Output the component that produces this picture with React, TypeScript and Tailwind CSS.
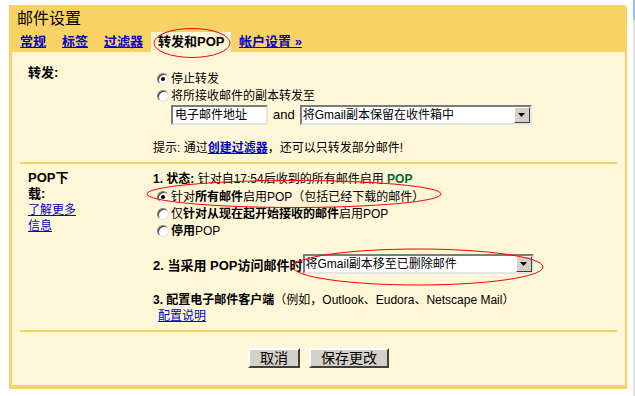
import React from 'react';

function Radio({ checked }: { checked?: boolean }) {
  return (
    <span className="inline-flex items-center justify-center shrink-0 w-[12px] h-[12px] rounded-full bg-white border border-t-[#7b7b7b] border-l-[#7b7b7b] border-b-[#e4e4e4] border-r-[#e4e4e4] shadow-[inset_1px_1px_0_#404040]">
      {checked && <span className="w-[4px] h-[4px] rounded-full bg-black" />}
    </span>
  );
}

function Select({ width, label }: { width: string; label: string }) {
  return (
    <div className={`flex ${width} h-[20px] bg-white border-2 border-t-[#7b7b7b] border-l-[#7b7b7b] border-b-[#e4e4e4] border-r-[#e4e4e4]`}>
      <span className="flex-1 pl-[1px] leading-[16px] whitespace-nowrap overflow-hidden">{label}</span>
      <span className="flex items-center justify-center w-[16px] h-[16px] bg-[#d4d0c8] border border-t-[#ffffff] border-l-[#ffffff] border-b-[#404040] border-r-[#404040]">
        <svg width="7" height="4" viewBox="0 0 7 4">
          <path d="M0 0h7L3.5 4z" fill="#000" />
        </svg>
      </span>
    </div>
  );
}

function Button({ children }: { children: React.ReactNode }) {
  return (
    <button className="h-[20px] px-[10px] text-[14px] leading-[16px] bg-[#d4d0c8] border-2 border-t-[#ffffff] border-l-[#ffffff] border-b-[#404040] border-r-[#404040]">
      {children}
    </button>
  );
}

const link = 'text-[#0000cc] underline';

export default function App() {
  return (
    <div className="relative w-[635px] h-[396px] bg-white overflow-hidden text-[12px] text-black font-['Liberation_Sans','Noto_Sans_CJK_SC',sans-serif]">
      <div className="flex items-start">
        <div className="ml-[9px] mt-[5px] w-[618px] bg-[#fad163] rounded-tr-[3px] pb-[4px]">
          {/* header */}
          <div className="pt-[2px] pl-[8px] h-[27px]">
            <h1 className="text-[16px] leading-[23px]">邮件设置</h1>
          </div>
          <div className="flex h-[20px] text-[13px] font-bold leading-[20px]">
            <a className={`${link} ml-[11px]`}>常规</a>
            <a className={`${link} ml-[16px]`}>标签</a>
            <a className={`${link} ml-[16px]`}>过滤器</a>
            <span className="ml-[8px] w-[80px] bg-[#fff7d7] pl-[7px]">转发和POP</span>
            <a className={`${link} ml-[8px]`}>帐户设置 »</a>
          </div>

          {/* content */}
          <div className="ml-[3px] mr-[2px] bg-[#fff7d7] h-[333px]">
            {/* forwarding */}
            <div className="flex h-[110px] pl-[16px]">
              <div className="w-[125px] pt-[13px] text-[13px] font-bold leading-[16px]">转发:</div>
              <div className="pt-[18px]">
                <div className="flex items-center h-[17px] ml-[4px] gap-[2px]">
                  <Radio checked />
                  <span>停止转发</span>
                </div>
                <div className="flex items-center h-[17px] ml-[4px] gap-[2px]">
                  <Radio />
                  <span>将所接收邮件的副本转发至</span>
                </div>
                <div className="flex items-center h-[20px] mt-[1px] ml-[18px]">
                  <div className="w-[97px] h-[20px] bg-white border-2 border-t-[#7b7b7b] border-l-[#7b7b7b] border-b-[#e4e4e4] border-r-[#e4e4e4] pl-[2px] leading-[16px]">
                    电子邮件地址
                  </div>
                  <span className="mx-[5px] text-[13px]">and</span>
                  <Select width="w-[232px]" label="将Gmail副本保留在收件箱中" />
                </div>
                <div className="mt-[15px] h-[16px] leading-[16px]">
                  提示: 通过<a className={`${link} font-bold`}>创建过滤器</a>，还可以只转发部分邮件!
                </div>
              </div>
            </div>

            <div className="mx-[8px] h-[2px] bg-[#fad163]" />

            {/* POP */}
            <div className="flex h-[166px] pl-[16px]">
              <div className="w-[125px] pt-[6px] leading-[16px]">
                <div className="w-[50px]">
                  <div className="text-[13px] font-bold">POP下载:</div>
                  <a className={link}>了解更多信息</a>
                </div>
              </div>
              <div className="pt-[7px]">
                <div className="h-[16px] leading-[16px]">
                  <b>1. 状态:</b> 针对自17:54后收到的所有邮件启用 <b className="text-[#006633]">POP</b>
                </div>
                <div className="flex items-center h-[17px] ml-[4px] gap-[2px] mt-[1px]">
                  <Radio checked />
                  <span>
                    针对<b>所有邮件</b>启用POP（包括已经下载的邮件）
                  </span>
                </div>
                <div className="flex items-center h-[17px] ml-[4px] gap-[2px]">
                  <Radio />
                  <span>
                    仅<b>针对从现在起开始接收的邮件</b>启用POP
                  </span>
                </div>
                <div className="flex items-center h-[17px] ml-[4px] gap-[2px]">
                  <Radio />
                  <span>
                    <b>停用</b>POP
                  </span>
                </div>
                <div className="flex items-center h-[20px] mt-[15px]">
                  <b className="text-[13px] pt-[3px]">2. 当采用 POP访问邮件时</b>
                  <Select width="w-[231px]" label="将Gmail副本移至已删除邮件" />
                </div>
                <div className="mt-[19px] h-[15px] leading-[15px]">
                  <b>3. 配置电子邮件客户端</b>（例如，Outlook、Eudora、Netscape Mail）
                </div>
                <div className="h-[16px] leading-[16px] pl-[5px]">
                  <a className={link}>配置说明</a>
                </div>
              </div>
            </div>

            <div className="mx-[8px] h-[2px] bg-[#fad163]" />

            <div className="flex justify-center gap-[9px] pt-[16px]">
              <Button>取消</Button>
              <Button>保存更改</Button>
            </div>
          </div>
        </div>
        <div className="ml-[6px] w-[2px] h-[396px] flex flex-col">
          <div className="h-[20px] bg-[#9dbde6]" />
          <div className="flex-1 bg-[#e6e6e6]" />
        </div>
      </div>

      {/* red annotation ellipses */}
      <svg className="absolute inset-0 pointer-events-none" width="635" height="396">
        <ellipse cx="192" cy="43" rx="38" ry="14.5" fill="none" stroke="#ff0000" strokeWidth="1" />
        <ellipse cx="294" cy="194" rx="147" ry="13.5" fill="none" stroke="#ff0000" strokeWidth="1" />
        <ellipse cx="418" cy="267" rx="125" ry="18" fill="none" stroke="#ff0000" strokeWidth="1" />
      </svg>
    </div>
  );
}
